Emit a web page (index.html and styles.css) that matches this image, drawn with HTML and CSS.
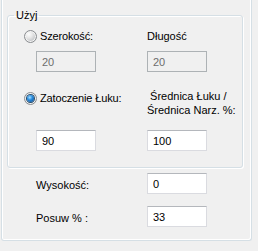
FILE: index.html
```html
<!DOCTYPE html>
<html lang="pl">
<head>
    <meta charset="UTF-8">
    <title>Użyj</title>
    <link rel="stylesheet" href="styles.css">
</head>
<body>
    <div class="panel">
        <fieldset class="use-group">
            <legend>Użyj</legend>

            <div class="use-grid">
                <label class="radio-row">
                    <input type="radio" name="mode" class="radio">
                    <span>Szerokość:</span>
                </label>
                <div class="plain-label">Długość</div>

                <input type="text" class="field field-left" value="20" disabled>
                <input type="text" class="field" value="20" disabled>

                <label class="radio-row radio-row-low">
                    <input type="radio" name="mode" class="radio" checked>
                    <span>Zatoczenie Łuku:</span>
                </label>
                <div class="plain-label two-lines">&nbsp;Średnica Łuku /<br>Średnica Narz. %:</div>

                <input type="text" class="field field-left" value="90">
                <input type="text" class="field" value="100">
            </div>
        </fieldset>

        <div class="extra-grid">
            <div class="extra-label">Wysokość:</div>
            <input type="text" class="field" value="0">

            <div class="extra-label">Posuw % :</div>
            <input type="text" class="field" value="33">
        </div>
    </div>
</body>
</html>
```

FILE: styles.css
```css
* {
    box-sizing: border-box;
}

body {
    margin: 0;
    background-color: #f0f0f0;
    font-family: "Liberation Sans", Arial, sans-serif;
    font-size: 11px;
    color: #000;
}

.panel {
    width: 251px;
    height: 241px;
    margin-left: 1px;
    padding: 9px 8px 0 5px;
    border: 1px solid #d5dfe5;
    border-top: none;
    border-radius: 0 0 3px 3px;
    box-shadow: inset 1px 0 0 #fff, inset -1px -1px 0 #fff;
}

.use-group {
    width: 236px;
    margin: 0;
    padding: 0 6px 16px 6px;
    border: 1px solid #d5dfe5;
    border-radius: 3px;
    box-shadow: inset 1px 1px 0 #fff, 1px 1px 0 #fff;
}

.use-group legend {
    padding: 0 2px;
    line-height: 13px;
}

.use-grid {
    display: grid;
    grid-template-columns: 123px 60px;
    margin: 8px 0 0 10px;
    align-items: start;
}

.radio-row {
    display: flex;
    align-items: center;
    gap: 3px;
    height: 13px;
    line-height: 13px;
    letter-spacing: -0.15px;
}

.radio-row-low {
    margin-top: 20px;
}

.plain-label {
    line-height: 13px;
    white-space: nowrap;
}

.two-lines {
    margin-top: 17px;
    line-height: 14px;
}

.radio {
    appearance: none;
    -webkit-appearance: none;
    flex: none;
    width: 13px;
    height: 13px;
    margin: 0;
    border: 1px solid #8a8d90;
    border-radius: 50%;
    background: radial-gradient(circle at 35% 30%, #fdfdfd 0, #e6e6e6 35%, #bfc1c4 75%, #d8d9db 100%);
    box-shadow: inset 0 0 0 1px #f4f4f4;
    position: relative;
}

.radio:checked::after {
    content: "";
    position: absolute;
    left: 2px;
    top: 2px;
    width: 7px;
    height: 7px;
    border-radius: 50%;
    background: radial-gradient(circle at 40% 35%, #a9e0ff 0, #2a8ee0 40%, #0c4f95 90%);
    box-shadow: 0 0 0 1px #274e6e;
}

.field {
    width: 60px;
    height: 21px;
    margin: 0;
    padding: 0 5px;
    border: 1px solid #dadbe0;
    border-top-color: #b4b7bc;
    background: #fff;
    font-family: inherit;
    font-size: 11px;
    color: #000;
    outline: none;
}

.field:disabled {
    background: #f0f0f0;
    border-color: #adb2b5;
    color: #6d6d6d;
}

.field-left {
    margin-left: 12px;
}

.use-grid > .field {
    margin-top: 8px;
}

.use-grid > .field:nth-last-child(-n+2) {
    margin-top: 13px;
}

.extra-grid {
    display: grid;
    grid-template-columns: 111px 60px;
    row-gap: 12px;
    align-items: center;
    margin: 5px 0 0 29px;
}

.extra-label {
    padding-top: 3px;
}
```
